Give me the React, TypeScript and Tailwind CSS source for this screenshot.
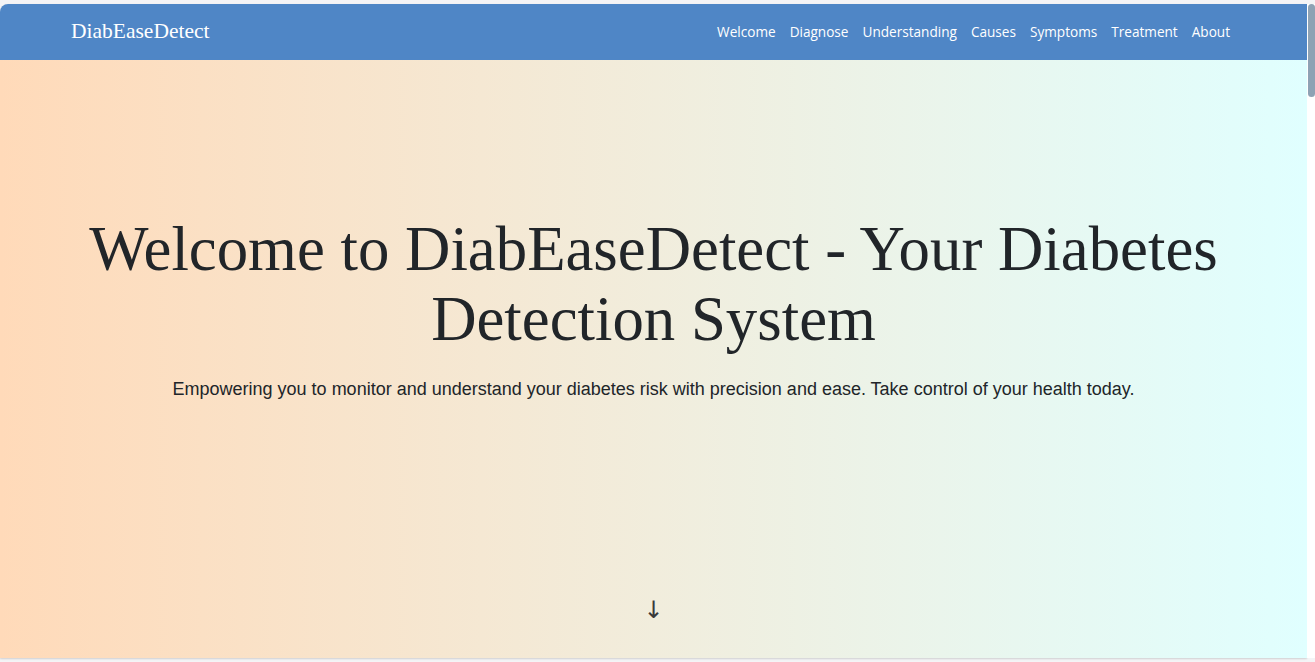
const links = ['Welcome', 'Diagnose', 'Understanding', 'Causes', 'Symptoms', 'Treatment', 'About']

function Navbar() {
  return (
    <nav className="flex h-14 shrink-0 items-center justify-between bg-[#4f86c6] pl-[71px] pr-[77px]">
      <a className="text-[21.5px] leading-none text-white [font-family:'Liberation_Serif',serif]">
        DiabEaseDetect
      </a>
      <ul className="flex items-center gap-[14px] pt-[1px] text-[13.6px] text-white [font-family:'Open_Sans',sans-serif]">
        {links.map(link => (
          <li key={link}>
            <a>{link}</a>
          </li>
        ))}
      </ul>
    </nav>
  )
}

function Hero() {
  return (
    <section className="flex flex-1 flex-col items-center bg-gradient-to-r from-[#ffdab9] to-[#e0ffff] pt-[154px] text-[#212529]">
      <h1 className="w-[1180px] text-center text-[62.8px] leading-[70px] [font-family:'Liberation_Serif',serif]">
        Welcome to DiabEaseDetect - Your Diabetes Detection System
      </h1>
      <p className="mt-[22px] text-[18px] leading-[27px] [font-family:'Liberation_Sans',sans-serif]">
        Empowering you to monitor and understand your diabetes risk with precision and ease. Take control of your health today.
      </p>
      <div className="mt-auto mb-[36px] text-[24px] leading-none text-[#3a3a3a] [font-family:'DejaVu_Sans',sans-serif]">
        ↓
      </div>
    </section>
  )
}

export default function App() {
  return (
    <div className="flex h-[662px] w-[1315px] overflow-hidden bg-[#f4f4f6] pt-1 pb-1">
      <div className="flex flex-1 flex-col overflow-hidden rounded-tl-lg shadow-[0_1px_2px_rgba(0,0,0,0.15)]">
        <Navbar />
        <Hero />
      </div>
      <div className="w-2 shrink-0 bg-white pl-px">
        <div className="h-[93px] rounded-b-sm rounded-t-sm bg-[#8ea2b4]" />
      </div>
    </div>
  )
}
